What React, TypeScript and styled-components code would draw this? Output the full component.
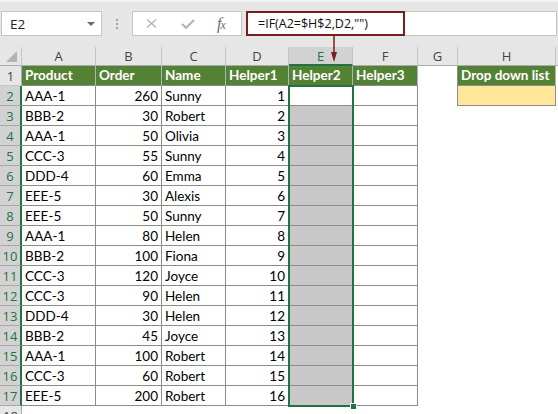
import React from 'react';
import styled, { createGlobalStyle, css } from 'styled-components';

const GlobalStyle = createGlobalStyle`
  html, body { margin: 0; padding: 0; background: #ffffff; }
  body { font-family: Lato, "Open Sans", sans-serif; }
  * { box-sizing: border-box; }
`;

const GREEN = '#217346';
const TABLE_LINE = '#8c8c8c';
const HEAD_LINE = '#c6c6c6';

const Window = styled.div`
  position: relative;
  width: 558px;
  height: 414px;
  overflow: hidden;
  background: #ffffff;
  display: flex;
  flex-direction: column;
`;

const TopBar = styled.div`
  flex: none;
  height: 47px;
  background: #e6e6e6;
  border-top: 2px solid #f2f2f2;
  display: flex;
  align-items: center;
  padding: 0 1px 2px 1px;
`;

const NameBox = styled.div`
  width: 101px;
  height: 25px;
  background: #ffffff;
  border: 1px solid ${HEAD_LINE};
  display: flex;
  align-items: center;
  justify-content: space-between;
  padding: 0 6px 0 8px;
  font-family: "Open Sans", sans-serif;
  font-size: 13.5px;
  color: #222;
`;

const DropArrow = styled.span`
  width: 0;
  height: 0;
  border-left: 4px solid transparent;
  border-right: 4px solid transparent;
  border-top: 4px solid #6a6a6a;
`;

const Grip = styled.div`
  width: 30px;
  display: flex;
  flex-direction: column;
  align-items: center;
  gap: 2px;
  & > span {
    width: 2px;
    height: 2px;
    background: #a0a0a0;
  }
`;

const ButtonBox = styled.div`
  width: 110px;
  height: 25px;
  background: #ffffff;
  border: 1px solid ${HEAD_LINE};
  display: flex;
  align-items: center;
  padding: 0 0 0 13px;
`;

const IconSlot = styled.div<{ $w: number }>`
  width: ${(p) => p.$w}px;
  display: flex;
  align-items: center;
  justify-content: flex-start;
`;

const Fx = styled.span`
  font-family: "Liberation Serif", serif;
  font-style: italic;
  font-size: 16px;
  color: #6a6a6a;
  letter-spacing: -1px;
  & > small { font-size: 12px; }
`;

const FormulaBar = styled.div`
  margin-left: 4px;
  flex: 1;
  height: 25px;
  background: #ffffff;
  border: 1px solid ${HEAD_LINE};
  border-left: none;
  display: flex;
`;

const FormulaHighlight = styled.div`
  width: 159px;
  height: 25px;
  margin-top: -1px;
  border: 2px solid #7b1c1c;
  display: flex;
  align-items: center;
  padding-left: 10px;
  font-family: "Open Sans", sans-serif;
  font-size: 12.5px;
  color: #111;
`;

const Sheet = styled.div`
  position: relative;
  display: grid;
  grid-template-columns: 22px 74px 66px 64px 63px 64px 65px 40px 98px 1fr;
  grid-template-rows: 19px repeat(18, 20px);
`;

const headerText = css`
  font-family: "Open Sans", sans-serif;
  font-size: 13px;
  color: #444;
  display: flex;
  align-items: center;
  justify-content: center;
`;

const Corner = styled.div`
  position: relative;
  background: #e6e6e6;
  border-right: 1px solid ${HEAD_LINE};
  border-bottom: 1px solid #ababab;
  &::after {
    content: '';
    position: absolute;
    right: 4px;
    bottom: 3px;
    width: 11px;
    height: 11px;
    background: #b4b4b4;
    clip-path: polygon(100% 0, 100% 100%, 0 100%);
  }
`;

const ColHead = styled.div<{ $sel?: boolean }>`
  ${headerText};
  background: #e6e6e6;
  border-right: 1px solid ${HEAD_LINE};
  border-bottom: 1px solid #ababab;
  ${(p) =>
    p.$sel &&
    css`
      background: #d2d2d2;
      color: ${GREEN};
      border-bottom: 2px solid ${GREEN};
    `}
`;

const RowHead = styled.div<{ $sel?: boolean }>`
  ${headerText};
  background: #e6e6e6;
  border-right: 1px solid #ababab;
  border-bottom: 1px solid ${HEAD_LINE};
  padding-top: 1px;
  ${(p) =>
    p.$sel &&
    css`
      background: #d2d2d2;
      color: ${GREEN};
      border-right: 2px solid ${GREEN};
      border-bottom-color: #a8a8a8;
    `}
`;

const cellText = css<{ $right?: boolean }>`
  display: flex;
  align-items: flex-end;
  justify-content: ${(p) => (p.$right ? 'flex-end' : 'flex-start')};
  padding: 0 3px 0 3px;
  font-family: Lato, "Open Sans", sans-serif;
  font-size: 13.5px;
  line-height: 16px;
  white-space: nowrap;
  overflow: hidden;
`;

const TitleCell = styled.div<{ $right?: boolean }>`
  ${cellText};
  padding-bottom: 2px;
  background: #548235;
  color: #ffffff;
  font-weight: 700;
  border-right: 1px solid #b4b4b4;
  border-bottom: 1px solid ${TABLE_LINE};
`;

const DataCell = styled.div<{ $right?: boolean; $shade?: boolean }>`
  ${cellText};
  padding-bottom: 1px;
  background: ${(p) => (p.$shade ? '#c8c8c8' : '#ffffff')};
  color: #000;
  border-right: 1px solid ${TABLE_LINE};
  border-bottom: 1px solid ${TABLE_LINE};
`;

const BlankCell = styled.div<{ $edge?: boolean }>`
  background: #ffffff;
  border-right: ${(p) => (p.$edge ? `1px solid ${TABLE_LINE}` : 'none')};
`;

const DropValue = styled.div`
  background: #ffe699;
  border-right: 1px solid ${TABLE_LINE};
  border-bottom: 1px solid ${TABLE_LINE};
`;

const Filler = styled.div`
  background: #ffffff;
`;

const FillerHead = styled.div`
  background: #e6e6e6;
  border-bottom: 1px solid #ababab;
`;

const Selection = styled.div`
  position: absolute;
  left: 288px;
  top: 38px;
  width: 66px;
  height: 322px;
  border: 2px solid ${GREEN};
  pointer-events: none;
`;

const FillHandle = styled.div`
  position: absolute;
  right: -5px;
  bottom: -5px;
  width: 7px;
  height: 7px;
  background: ${GREEN};
  border: 1px solid #ffffff;
`;

const Pointer = styled.svg`
  position: absolute;
  left: 329px;
  top: 36px;
  overflow: visible;
`;

const COLUMNS = ['A', 'B', 'C', 'D', 'E', 'F', 'G', 'H'];
const TITLES = ['Product', 'Order', 'Name', 'Helper1', 'Helper2', 'Helper3'];

const DATA: [string, number, string, number][] = [
  ['AAA-1', 260, 'Sunny', 1],
  ['BBB-2', 30, 'Robert', 2],
  ['AAA-1', 50, 'Olivia', 3],
  ['CCC-3', 55, 'Sunny', 4],
  ['DDD-4', 60, 'Emma', 5],
  ['EEE-5', 30, 'Alexis', 6],
  ['EEE-5', 50, 'Sunny', 7],
  ['AAA-1', 80, 'Helen', 8],
  ['BBB-2', 100, 'Fiona', 9],
  ['CCC-3', 120, 'Joyce', 10],
  ['CCC-3', 90, 'Helen', 11],
  ['DDD-4', 30, 'Helen', 12],
  ['BBB-2', 45, 'Joyce', 13],
  ['AAA-1', 100, 'Robert', 14],
  ['CCC-3', 60, 'Robert', 15],
  ['EEE-5', 200, 'Robert', 16],
];

export default function App() {
  return (
    <>
      <GlobalStyle />
      <Window>
        <TopBar>
          <NameBox>
            <span>E2</span>
            <DropArrow />
          </NameBox>
          <Grip>
            <span />
            <span />
            <span />
          </Grip>
          <ButtonBox>
            <IconSlot $w={35}>
              <svg width="11" height="9" viewBox="0 0 11 9">
                <path d="M1 0.5 L10 8.5 M10 0.5 L1 8.5" stroke="#b4b4b4" strokeWidth="1.4" fill="none" />
              </svg>
            </IconSlot>
            <IconSlot $w={36}>
              <svg width="14" height="10" viewBox="0 0 14 10">
                <path d="M1 5 L5 8.8 L13 1" stroke="#b4b4b4" strokeWidth="2.2" fill="none" />
              </svg>
            </IconSlot>
            <IconSlot $w={22}>
              <Fx>
                f<small>x</small>
              </Fx>
            </IconSlot>
          </ButtonBox>
          <FormulaBar>
            <FormulaHighlight>=IF(A2=$H$2,D2,"")</FormulaHighlight>
          </FormulaBar>
        </TopBar>
        <Sheet>
          <Corner />
          {COLUMNS.map((c) => (
            <ColHead key={c} $sel={c === 'E'}>
              {c}
            </ColHead>
          ))}
          <FillerHead />

          <RowHead>1</RowHead>
          {TITLES.map((t) => (
            <TitleCell key={t}>{t}</TitleCell>
          ))}
          <BlankCell $edge />
          <TitleCell>Drop down list</TitleCell>
          <Filler />

          {DATA.map(([prod, order, name, helper], i) => {
            const r = i + 2;
            return (
              <React.Fragment key={r}>
                <RowHead $sel>{r}</RowHead>
                <DataCell>{prod}</DataCell>
                <DataCell $right>{order}</DataCell>
                <DataCell>{name}</DataCell>
                <DataCell $right>{helper}</DataCell>
                <DataCell $shade={r > 2} />
                <DataCell />
                <BlankCell $edge={r === 2} />
                {r === 2 ? <DropValue /> : <BlankCell />}
                <Filler />
              </React.Fragment>
            );
          })}

          <RowHead>18</RowHead>
          {COLUMNS.map((c) => (
            <BlankCell key={c} />
          ))}
          <Filler />

          <Selection>
            <FillHandle />
          </Selection>
        </Sheet>
        <Pointer width="10" height="27" viewBox="0 0 10 27">
          <line x1="5" y1="0" x2="5" y2="18" stroke="#7b1c1c" strokeWidth="1.5" />
          <polygon points="2,16 8,16 5,26" fill="#7b1c1c" />
        </Pointer>
      </Window>
    </>
  );
}
